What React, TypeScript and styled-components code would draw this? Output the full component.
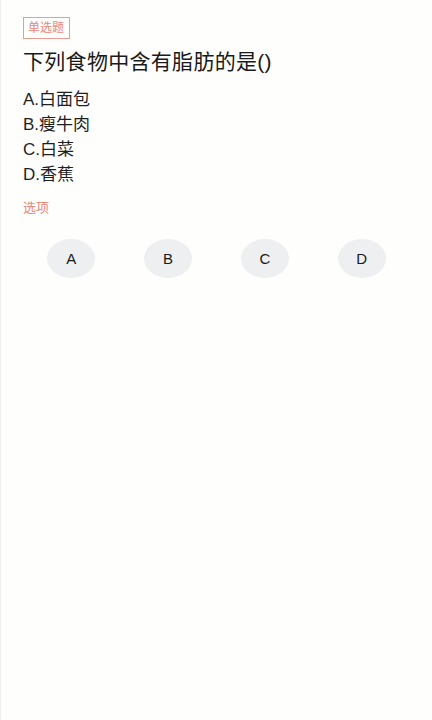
import styled, { createGlobalStyle } from "styled-components";

const GlobalStyle = createGlobalStyle`
    html, body {
        margin: 0;
        padding: 0;
        background: #fefefd;
    }
    body {
        font-family: "Liberation Sans", "Noto Sans CJK SC", sans-serif;
        color: #1c1c1c;
    }
`

const options = [
    { key: "A", text: "白面包" },
    { key: "B", text: "瘦牛肉" },
    { key: "C", text: "白菜" },
    { key: "D", text: "香蕉" },
];

const App = () => {
    return (
        <>
            <GlobalStyle />
            <Page>
                <TypeTag>单选题</TypeTag>
                <Question>下列食物中含有脂肪的是()</Question>
                <OptionList>
                    {options.map((option) => (
                        <OptionItem key={option.key}>{option.key}.{option.text}</OptionItem>
                    ))}
                </OptionList>
                <SectionLabel>选项</SectionLabel>
                <ChoiceRow>
                    {options.map((option) => (
                        <ChoiceCell key={option.key}>
                            <ChoiceButton>{option.key}</ChoiceButton>
                        </ChoiceCell>
                    ))}
                </ChoiceRow>
            </Page>
        </>
    );
}

export default App;

const Page = styled.div`
    min-height: 720px;
    box-sizing: border-box;
    padding: 17px 22px 0 22px;
    border-left: 1px solid #f0f0ee;
`

const TypeTag = styled.div`
    display: inline-block;
    border: 1px solid #ec9a92;
    color: #e8877c;
    font-size: 12px;
    line-height: 20px;
    padding: 0 5px 0 4px;
`

const Question = styled.div`
    margin-top: 10px;
    font-size: 21px;
    line-height: 26px;
    letter-spacing: 0.3px;
    color: #1a1a1a;
`

const OptionList = styled.div`
    margin-top: 12px;
    display: flex;
    flex-direction: column;
`

const OptionItem = styled.div`
    font-size: 17px;
    line-height: 25px;
    color: #1f1f1f;
`

const SectionLabel = styled.div`
    margin-top: 12px;
    font-size: 13px;
    line-height: 18px;
    color: #e8877c;
`

const ChoiceRow = styled.div`
    margin-top: 22px;
    display: grid;
    grid-template-columns: repeat(4, 1fr);
`

const ChoiceCell = styled.div`
    display: flex;
    justify-content: center;
`

const ChoiceButton = styled.div`
    width: 48px;
    height: 39px;
    border-radius: 50%;
    background: #eeeff1;
    display: flex;
    align-items: center;
    justify-content: center;
    font-size: 15px;
    color: #1a1a1a;
`
